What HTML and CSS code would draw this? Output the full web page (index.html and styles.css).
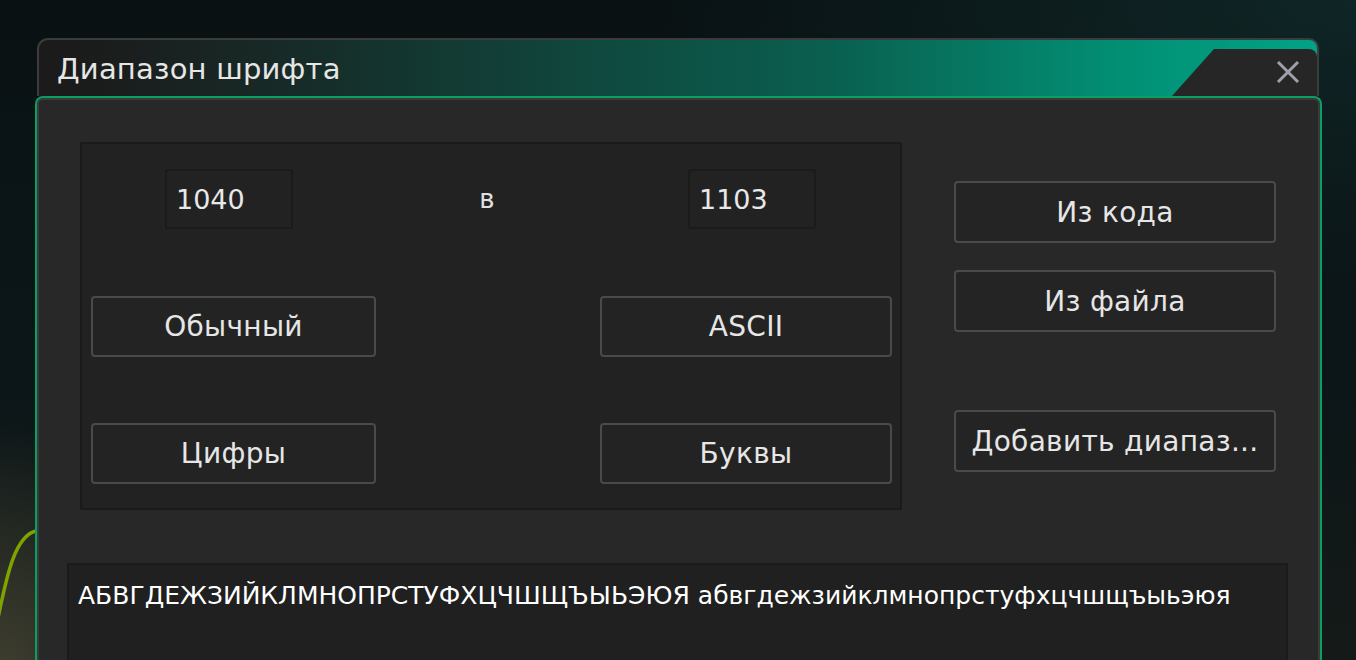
FILE: index.html
```html
<!DOCTYPE html>
<html lang="ru">
<head>
  <meta charset="UTF-8" />
  <meta name="viewport" content="width=device-width, initial-scale=1.0"/>
  <title>Диапазон шрифта</title>
  <link rel="stylesheet" href="styles.css">
</head>
<body>
  <svg class="bg-curve" width="40" height="160" viewBox="0 0 40 160">
    <path d="M -2 118 C 6 80, 14 36, 36 31" fill="none" stroke="#7fa400" stroke-width="3.5" stroke-linecap="round"/>
  </svg>

  <div class="window">
    <div class="title-bar">
      <span class="title">Диапазон шрифта</span>
      <div class="close-tab">
        <svg class="close-icon" width="24" height="24" viewBox="0 0 24 24">
          <path d="M2 2 L22 22 M22 2 L2 22" stroke="#9da2aa" stroke-width="3"/>
        </svg>
      </div>
    </div>

    <div class="panel">
      <div class="top-area">
        <div class="group-box">
          <div class="range-row">
            <input class="range-input" type="text" value="1040" />
            <span class="range-sep">в</span>
            <input class="range-input" type="text" value="1103" />
          </div>
          <div class="preset-row">
            <button class="btn btn-left">Обычный</button>
            <button class="btn btn-right">ASCII</button>
          </div>
          <div class="preset-row">
            <button class="btn btn-left">Цифры</button>
            <button class="btn btn-right">Буквы</button>
          </div>
        </div>

        <div class="side-buttons">
          <button class="btn btn-side">Из кода</button>
          <button class="btn btn-side">Из файла</button>
          <button class="btn btn-side btn-add">Добавить диапаз...</button>
        </div>
      </div>

      <div class="preview">АБВГДЕЖЗИЙКЛМНОПРСТУФХЦЧШЩЪЫЬЭЮЯ абвгдежзийклмнопрстуфхцчшщъыьэюя</div>
    </div>
  </div>
</body>
</html>
```

FILE: styles.css
```css
body {
  margin: 0;
  height: 660px;
  overflow: hidden;
  font-family: "DejaVu Sans", Verdana, sans-serif;
  color: #e4e4e4;
  background:
    radial-gradient(ellipse 180px 260px at 0 680px, rgba(78, 76, 56, 0.75), rgba(78, 76, 56, 0) 100%),
    radial-gradient(ellipse 700px 300px at 1356px 0, rgba(16, 40, 40, 0.9), rgba(16, 40, 40, 0) 100%),
    linear-gradient(180deg, #091113 0%, #0c1618 60%, #151a18 100%);
  position: relative;
}

.bg-curve {
  position: absolute;
  left: 0;
  top: 500px;
}

.window {
  position: relative;
  padding: 38px 0 0 35px;
  width: 1287px;
}

/* title bar */
.title-bar {
  position: relative;
  margin: 0 3px 0 2px;
  height: 56px;
  border: 2px solid #3c3c3c;
  border-bottom: none;
  border-radius: 11px 10px 0 0;
  background: linear-gradient(90deg, #1b1b1b 3%, #162d29 22%, #10443b 40%, #0a6050 62%, #029075 85%, #00a385 100%);
}

.title {
  display: block;
  padding: 12px 0 0 18px;
  font-size: 29px;
  letter-spacing: 0.2px;
  color: #e6e6e6;
}

.close-tab {
  position: absolute;
  right: 0;
  top: 9px;
  bottom: 0;
  width: 145px;
  background-color: #262626;
  border-top-right-radius: 8px;
  clip-path: polygon(42px 0, 100% 0, 100% 100%, 0 100%);
  display: flex;
  align-items: center;
  justify-content: flex-end;
  padding-right: 17px;
  box-sizing: border-box;
}

.close-icon {
  margin-top: -2px;
}

/* main panel */
.panel {
  border: 2px solid #0a9e63;
  border-bottom: none;
  border-radius: 8px 8px 0 0;
  box-shadow: inset 0 0 0 2px #3a3a3a;
  background-color: #282828;
  padding: 44px 0 0 30px;
  height: 600px;
  box-sizing: border-box;
}

.top-area {
  display: flex;
  align-items: flex-start;
}

.group-box {
  margin-left: 13px;
  width: 822px;
  height: 368px;
  box-sizing: border-box;
  border: 2px solid #1a1a1a;
  border-radius: 2px;
  background-color: #222;
  padding: 25px 0 0 9px;
}

.range-row {
  display: flex;
  align-items: center;
  padding-left: 74px;
}

.range-input {
  width: 128px;
  height: 60px;
  box-sizing: border-box;
  background-color: #222;
  border: 2px solid #1b1b1b;
  border-radius: 3px;
  padding: 0 9px;
  font-family: "DejaVu Sans", Verdana, sans-serif;
  font-size: 27px;
  color: #e8e8e8;
  outline: none;
}

.range-sep {
  width: 395px;
  box-sizing: border-box;
  padding-right: 7px;
  text-align: center;
  font-size: 26px;
  color: #e0e0e0;
}

.preset-row {
  display: flex;
  margin-top: 67px;
}

.preset-row + .preset-row {
  margin-top: 66px;
}

.btn {
  height: 61px;
  background-color: #232323;
  border: 2px solid #4a4a4a;
  border-radius: 4px;
  font-family: "DejaVu Sans", Verdana, sans-serif;
  font-size: 28px;
  letter-spacing: 0.3px;
  color: #e6e6e6;
  padding: 0;
  cursor: pointer;
}

.btn-left {
  width: 285px;
}

.btn-right {
  width: 292px;
  margin-left: 224px;
}

.side-buttons {
  display: flex;
  flex-direction: column;
  margin-left: 52px;
  margin-top: 39px;
}

.btn-side {
  width: 322px;
  height: 62px;
  margin-bottom: 27px;
  background-color: #242424;
}

.btn-add {
  margin-top: 51px;
  white-space: nowrap;
}

/* preview of the glyphs */
.preview {
  margin-top: 53px;
  width: 1221px;
  height: 120px;
  box-sizing: border-box;
  border: 2px solid #1b1b1b;
  background-color: #202020;
  padding: 16px 0 0 9px;
  font-size: 25px;
  color: #fff;
  white-space: nowrap;
}
```
